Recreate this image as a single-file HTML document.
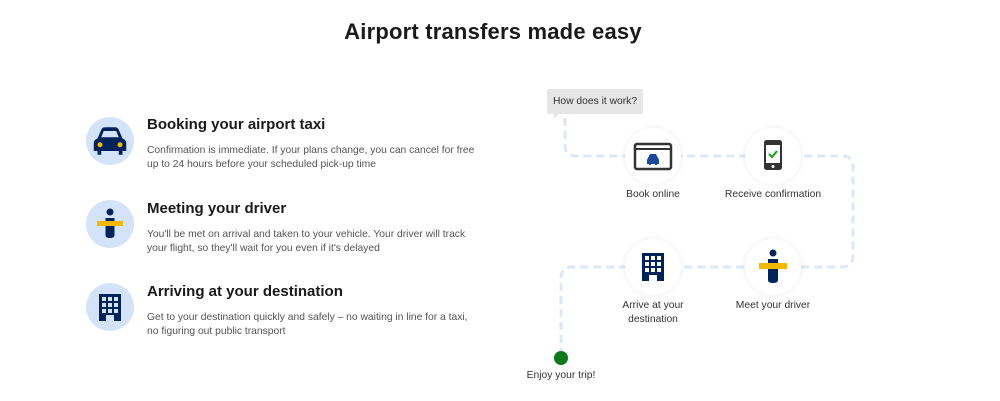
<!DOCTYPE html>
<html><head><style>
body{margin:0;width:1000px;height:401px;background:#fff;font-family:"Liberation Sans",sans-serif;position:relative;overflow:hidden;color:#1a1a1a}
h1{position:absolute;top:19px;left:0;width:986px;text-align:center;margin:0;font-size:22px;font-weight:600;letter-spacing:0.2px}
.c{position:absolute;left:86px;width:48px;height:48px;border-radius:50%;background:#d3e3fa}
.c svg{position:absolute;left:0;top:0}
.h{position:absolute;left:147px;font-size:15px;font-weight:600;color:#1a1a1a}
.p{position:absolute;left:147px;font-size:10.3px;line-height:13.5px;color:#555;width:330px}
.w{position:absolute;width:56px;height:56px;border-radius:50%;background:#fff;box-shadow:0 0 6px rgba(0,0,0,.08)}
.l{position:absolute;font-size:10.3px;color:#333;text-align:center;width:130px;line-height:14px}
</style></head><body>
<h1>Airport transfers made easy</h1>

<div class="c" style="top:117px"><svg width="48" height="48" viewBox="0 0 48 48"><g transform="translate(24 24) scale(1.25) translate(-24 -24)"><path d="M14 22 L17 15 Q18 13 20 13 H28 Q30 13 31 15 L34 22 Q37 23 37 26 V32 H34 V35 H31 V32 H17 V35 H14 V32 H11 V26 Q11 23 14 22Z M17 21 H31 L29 16 H19Z" fill="#00235c" fill-rule="evenodd"/><circle cx="16" cy="27" r="2" fill="#f5b800"/><circle cx="32" cy="27" r="2" fill="#f5b800"/></g></svg></div>
<div class="h" style="top:116px">Booking your airport taxi</div>
<div class="p" style="top:144px">Confirmation is immediate. If your plans change, you can cancel for free up to 24 hours before your scheduled pick-up time</div>

<div class="c" style="top:200px"><svg width="48" height="48"><circle cx="24" cy="12" r="3.5" fill="#00235c"/><path d="M19.5 18 H28.5 V35 Q28.5 38 24 38 Q19.5 38 19.5 35Z" fill="#00235c"/><rect x="11" y="21" width="26" height="5" fill="#f5b800"/></svg></div>
<div class="h" style="top:200px">Meeting your driver</div>
<div class="p" style="top:228px">You'll be met on arrival and taken to your vehicle. Your driver will track your flight, so they'll wait for you even if it's delayed</div>

<div class="c" style="top:283px"><svg width="48" height="48"><path d="M13 11 H35 V38 H28 V32 H20 V38 H13Z" fill="#00235c"/><g fill="#d3e3fa"><rect x="16" y="14" width="4" height="4"/><rect x="22" y="14" width="4" height="4"/><rect x="28" y="14" width="4" height="4"/><rect x="16" y="20" width="4" height="4"/><rect x="22" y="20" width="4" height="4"/><rect x="28" y="20" width="4" height="4"/><rect x="16" y="26" width="4" height="4"/><rect x="22" y="26" width="4" height="4"/><rect x="28" y="26" width="4" height="4"/></g></svg></div>
<div class="h" style="top:283px">Arriving at your destination</div>
<div class="p" style="top:311px">Get to your destination quickly and safely – no waiting in line for a taxi, no figuring out public transport</div>

<svg style="position:absolute;left:0;top:0" width="1000" height="401"><path d="M565 118 V145 Q565 156 576 156 H842 Q853 156 853 167 V256 Q853 267 842 267 H572 Q561 267 561 278 V355" fill="none" stroke="#dde8f7" stroke-width="3" stroke-dasharray="8 5"/>
<circle cx="561" cy="358" r="7" fill="#0b7a1a"/></svg>

<div style="position:absolute;left:547px;top:89px;width:96px;height:25px;background:#e6e6e6;border-radius:2px;font-size:10.3px;color:#333;line-height:25px;text-align:center">How does it work?</div>
<div style="position:absolute;left:554px;top:113px;width:0;height:0;border-left:6px solid #e6e6e6;border-bottom:6px solid transparent"></div>

<div class="w" style="left:625px;top:128px"><svg width="56" height="56"><rect x="10" y="16" width="36" height="25" rx="2" fill="none" stroke="#333" stroke-width="2.5"/><line x1="10" y1="21" x2="46" y2="21" stroke="#333" stroke-width="2"/><path d="M23 30 L25 26 H31 L33 30 Q34 31 34 33 V36 H32 V37 H30 V36 H26 V37 H24 V36 H22 V33 Q22 31 23 30Z" fill="#1a4a9e"/></svg></div>
<div class="w" style="left:745px;top:128px"><svg width="56" height="56"><rect x="19" y="12" width="18" height="30" rx="2.5" fill="#333"/><rect x="21" y="17" width="14" height="18" fill="#fff"/><path d="M24 26 L27 29 L32 23" fill="none" stroke="#1aa01a" stroke-width="2"/><circle cx="28" cy="38.5" r="1.5" fill="#fff"/></svg></div>
<div class="w" style="left:625px;top:239px"><svg width="56" height="56"><path d="M17 14 H39 V42 H32 V36 H24 V42 H17Z" fill="#00235c"/><g fill="#fff"><rect x="20" y="17" width="4" height="4"/><rect x="26" y="17" width="4" height="4"/><rect x="32" y="17" width="4" height="4"/><rect x="20" y="23" width="4" height="4"/><rect x="26" y="23" width="4" height="4"/><rect x="32" y="23" width="4" height="4"/><rect x="20" y="29" width="4" height="4"/><rect x="26" y="29" width="4" height="4"/><rect x="32" y="29" width="4" height="4"/></g></svg></div>
<div class="w" style="left:745px;top:239px"><svg width="56" height="56"><circle cx="28" cy="14" r="3.5" fill="#00235c"/><path d="M23 20 H33 V41 Q33 44 28 44 Q23 44 23 41Z" fill="#00235c"/><rect x="14" y="24" width="28" height="6" fill="#f5b800"/></svg></div>

<div class="l" style="left:588px;top:188px">Book online</div>
<div class="l" style="left:708px;top:188px">Receive confirmation</div>
<div class="l" style="left:588px;top:299px">Arrive at your<br>destination</div>
<div class="l" style="left:708px;top:299px">Meet your driver</div>
<div class="l" style="left:496px;top:369px">Enjoy your trip!</div>
</body></html>
